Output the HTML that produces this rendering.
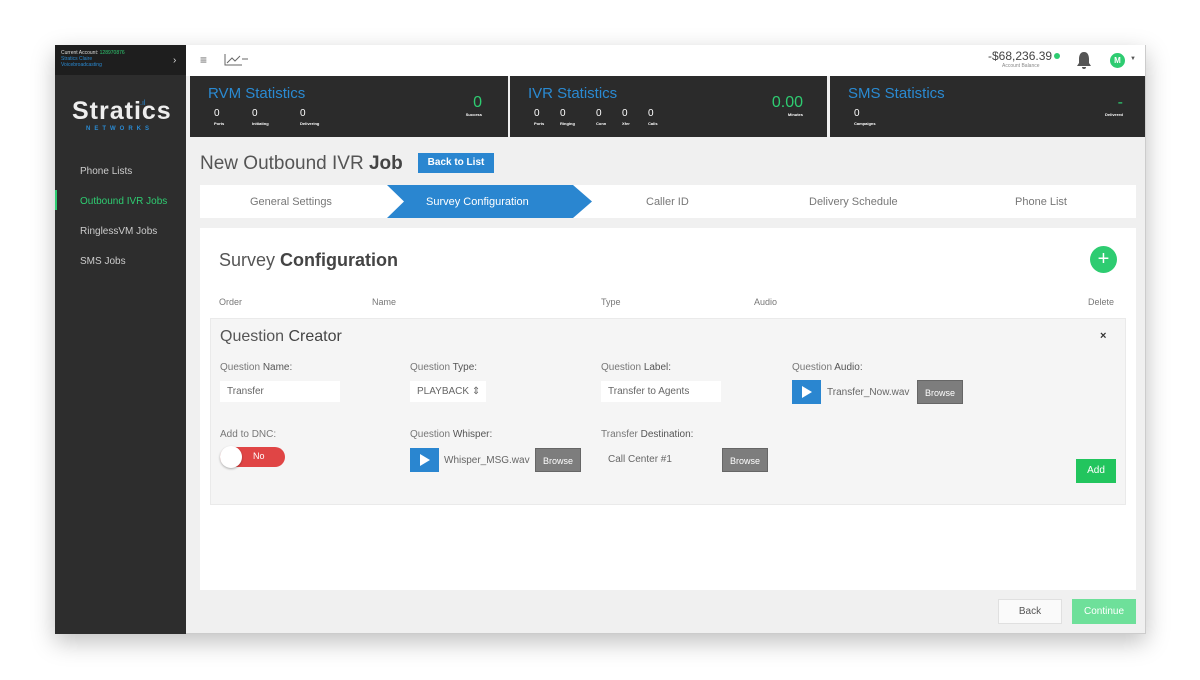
<!DOCTYPE html>
<html><head><meta charset="utf-8"><style>
*{margin:0;padding:0;box-sizing:border-box}
body{width:1200px;height:680px;background:#fff;font-family:"Liberation Sans",sans-serif;position:relative;overflow:hidden;color:#555}
.a{position:absolute;white-space:nowrap}
#app{left:55px;top:45px;width:1091px;height:589px;background:#f0f0f0;box-shadow:0 8px 22px rgba(0,0,0,.25);border:1px solid #ccc}
.stat{background:#2b2b2b;top:76px;height:61px}
.stat h3{position:absolute;left:18px;top:9px;font-weight:normal;font-size:15px;color:#2a8ad2}
.n{position:absolute;color:#fff;font-size:10px;line-height:10px}
.n small{display:block;font-size:4px;font-weight:bold}
.big{position:absolute;color:#2ecc71;font-size:16px;text-align:right}
.big small{display:block;color:#fff;font-size:4px;font-weight:bold}
.lbl{font-size:10px;color:#777}
.lbl b{color:#555;font-weight:normal}
.inp{background:#fff;font-size:10px;color:#666;padding:0 7px;line-height:21px;height:21px}
.play{background:#2a86d0;width:29px;height:24px}
.play:after{content:"";position:absolute;left:10px;top:6px;border-left:10px solid #fff;border-top:6px solid transparent;border-bottom:6px solid transparent}
.br{background:#7d7d7d;color:#fff;font-size:9px;height:24px;line-height:24px;text-align:center;width:46px;border:1px solid #666}
.menu{left:80px;font-size:10px;color:#ccc}
</style></head><body>
<div class="a" id="app"></div>
<div class="a" style="left:55px;top:45px;width:131px;height:589px;background:#2d2d2d"></div>
<div class="a" style="left:55px;top:45px;width:131px;height:30px;background:#1e1e1e"></div>
<div class="a" style="left:61px;top:50px;font-size:5px;color:#ddd;line-height:6px">Current Account: <span style="color:#2ecc71">128970876</span><br><span style="color:#2a8ad2">Stratics Claire<br>Voicebroadcasting</span></div>
<div class="a" style="left:173px;top:55px;color:#ddd;font-size:10px">›</div>
<div class="a" style="left:72px;top:97px;color:#eee;font-size:25px;font-weight:bold;letter-spacing:1px">Stratics</div>
<div class="a" style="left:86px;top:126px;color:#2a8ad2;font-size:6px;letter-spacing:4px;font-weight:bold">NETWORKS</div>
<div class="a" style="left:140px;top:100px;color:#2a8ad2;font-size:7px">.ıl</div>
<div class="a menu" style="top:166px">Phone Lists</div>
<div class="a" style="left:55px;top:190px;width:2px;height:20px;background:#2ecc71"></div>
<div class="a menu" style="top:196px;color:#2ecc71">Outbound IVR Jobs</div>
<div class="a menu" style="top:226px">RinglessVM Jobs</div>
<div class="a menu" style="top:256px">SMS Jobs</div>
<div class="a" style="left:186px;top:45px;width:959px;height:31px;background:#fff"></div>
<div class="a" style="left:200px;top:53px;color:#666;font-size:12px">≡</div>
<svg class="a" style="left:224px;top:53px" width="26" height="14"><path d="M1 1V12H18M3 10L8 5L11 8L16 3M18 6H24" stroke="#666" fill="none" stroke-width="1"/></svg>
<div class="a" style="left:988px;top:49px;font-size:12px;color:#444">-$68,236.39</div>
<div class="a" style="left:1054px;top:53px;width:6px;height:6px;border-radius:50%;background:#2ecc71"></div>
<div class="a" style="left:1002px;top:63px;font-size:5px;color:#888">Account Balance</div>
<svg class="a" style="left:1075px;top:51px" width="18" height="19"><path d="M9 1C5 1 4 5 4 8V12L2 15H16L14 12V8C14 5 13 1 9 1ZM7 16A2 2 0 0 0 11 16Z" fill="#555"/></svg>
<div class="a" style="left:1110px;top:53px;width:15px;height:15px;border-radius:50%;background:#2ecc71;color:#fff;font-size:8px;text-align:center;line-height:15px;font-weight:bold">M</div>
<div class="a" style="left:1130px;top:56px;font-size:6px;color:#555">▼</div>
<div class="a stat" style="left:190px;width:318px"><h3>RVM Statistics</h3>
<div class="n" style="left:24px;top:33px">0<small>Ports</small></div>
<div class="n" style="left:62px;top:33px">0<small>Initiating</small></div>
<div class="n" style="left:110px;top:33px">0<small>Delivering</small></div>
<div class="big" style="right:26px;top:18px">0<small>Success</small></div></div>
<div class="a stat" style="left:510px;width:317px"><h3>IVR Statistics</h3>
<div class="n" style="left:24px;top:33px">0<small>Ports</small></div>
<div class="n" style="left:50px;top:33px">0<small>Ringing</small></div>
<div class="n" style="left:86px;top:33px">0<small>Conn</small></div>
<div class="n" style="left:112px;top:33px">0<small>Xfer</small></div>
<div class="n" style="left:138px;top:33px">0<small>Calls</small></div>
<div class="big" style="right:24px;top:18px">0.00<small>Minutes</small></div></div>
<div class="a stat" style="left:830px;width:315px"><h3>SMS Statistics</h3>
<div class="n" style="left:24px;top:33px">0<small>Campaigns</small></div>
<div class="big" style="right:22px;top:18px">-<small>Delivered</small></div></div>
<div class="a" style="left:200px;top:153px;font-size:19px;color:#555">New Outbound IVR <b style="color:#444">Job</b></div>
<div class="a" style="left:418px;top:153px;width:76px;height:20px;background:#2a86d0;color:#fff;font-size:10px;text-align:center;line-height:20px;font-weight:bold">Back to List</div>
<div class="a" style="left:200px;top:185px;width:936px;height:33px;background:#fff"></div>
<svg class="a" style="left:387px;top:185px" width="206" height="33"><path d="M0 0H186L205 16.5L186 33H0L17 16.5Z" fill="#2a86d0"/></svg>
<div class="a" style="left:250px;top:196px;font-size:11px;color:#777">General Settings</div>
<div class="a" style="left:426px;top:196px;font-size:11px;color:#fff">Survey Configuration</div>
<div class="a" style="left:646px;top:196px;font-size:11px;color:#777">Caller ID</div>
<div class="a" style="left:809px;top:196px;font-size:11px;color:#777">Delivery Schedule</div>
<div class="a" style="left:1015px;top:196px;font-size:11px;color:#777">Phone List</div>
<div class="a" style="left:200px;top:228px;width:936px;height:362px;background:#fff"></div>
<div class="a" style="left:219px;top:250px;font-size:18px;color:#555">Survey <b style="color:#444">Configuration</b></div>
<div class="a" style="left:1090px;top:246px;width:27px;height:27px;border-radius:50%;background:#2ecc71;color:#fff;font-size:20px;text-align:center;line-height:26px">+</div>
<div class="a lbl" style="left:219px;top:297px;font-size:9px">Order</div>
<div class="a lbl" style="left:372px;top:297px;font-size:9px">Name</div>
<div class="a lbl" style="left:601px;top:297px;font-size:9px">Type</div>
<div class="a lbl" style="left:754px;top:297px;font-size:9px">Audio</div>
<div class="a lbl" style="left:1088px;top:297px;font-size:9px">Delete</div>
<div class="a" style="left:210px;top:318px;width:916px;height:187px;background:#f5f5f5;border:1px solid #eaeaea"></div>
<div class="a" style="left:220px;top:328px;font-size:16px;color:#555">Question <span style="color:#444">Creator</span></div>
<div class="a" style="left:1100px;top:330px;font-size:11px;color:#333;font-weight:bold">×</div>
<div class="a lbl" style="left:220px;top:362px">Question <b>Name:</b></div>
<div class="a inp" style="left:220px;top:381px;width:120px">Transfer</div>
<div class="a lbl" style="left:410px;top:362px">Question <b>Type:</b></div>
<div class="a inp" style="left:410px;top:381px;width:76px">PLAYBACK ⇕</div>
<div class="a lbl" style="left:601px;top:362px">Question <b>Label:</b></div>
<div class="a inp" style="left:601px;top:381px;width:120px">Transfer to Agents</div>
<div class="a lbl" style="left:792px;top:362px">Question <b>Audio:</b></div>
<div class="a play" style="left:792px;top:380px"></div>
<div class="a" style="left:827px;top:387px;font-size:10px;color:#666">Transfer_Now.wav</div>
<div class="a br" style="left:917px;top:380px">Browse</div>
<div class="a lbl" style="left:220px;top:429px">Add to DNC:</div>
<div class="a" style="left:220px;top:447px;width:65px;height:20px;border-radius:10px;background:#e04545"></div>
<div class="a" style="left:220px;top:446px;width:22px;height:22px;border-radius:50%;background:#fff;box-shadow:0 1px 2px rgba(0,0,0,.3)"></div>
<div class="a" style="left:253px;top:451px;font-size:9px;color:#fff">No</div>
<div class="a lbl" style="left:410px;top:429px">Question <b>Whisper:</b></div>
<div class="a play" style="left:410px;top:448px"></div>
<div class="a" style="left:444px;top:455px;font-size:10px;color:#666">Whisper_MSG.wav</div>
<div class="a br" style="left:535px;top:448px">Browse</div>
<div class="a lbl" style="left:601px;top:429px">Transfer <b>Destination:</b></div>
<div class="a" style="left:608px;top:454px;font-size:10px;color:#666">Call Center #1</div>
<div class="a br" style="left:722px;top:448px">Browse</div>
<div class="a" style="left:1076px;top:459px;width:40px;height:24px;background:#22c55e;color:#fff;font-size:10px;text-align:center;line-height:24px">Add</div>
<div class="a" style="left:998px;top:599px;width:64px;height:25px;background:#fafafa;border:1px solid #e0e0e0;font-size:10px;color:#555;text-align:center;line-height:23px">Back</div>
<div class="a" style="left:1072px;top:599px;width:64px;height:25px;background:#6ee09a;font-size:10px;color:#fff;text-align:center;line-height:25px">Continue</div>
</body></html>
